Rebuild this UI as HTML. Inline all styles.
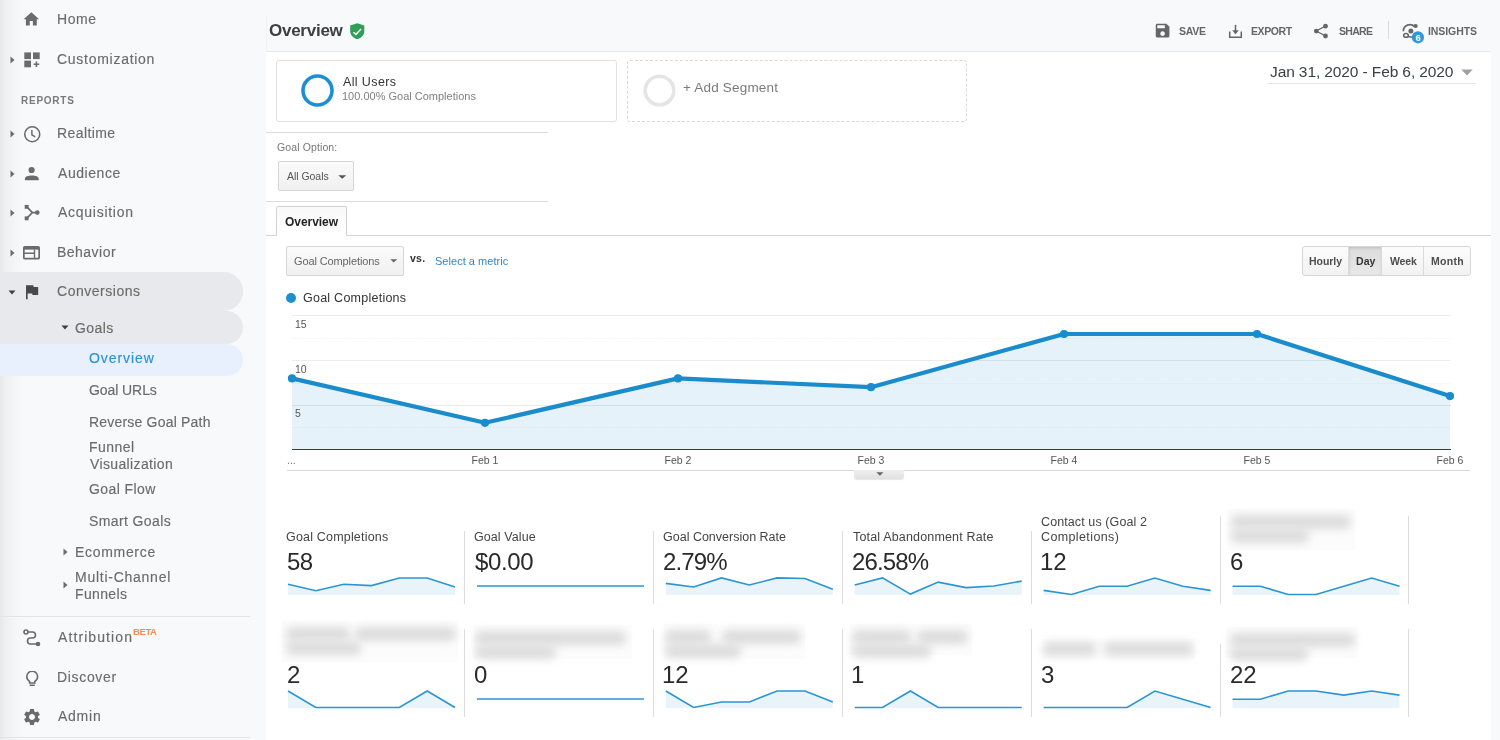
<!DOCTYPE html>
<html><head><meta charset="utf-8"><style>
html,body{margin:0;padding:0;width:1500px;height:740px;overflow:hidden;background:#fff}
body{position:relative;font-family:"Liberation Sans", sans-serif}
.t{position:absolute;white-space:nowrap;line-height:1;font-family:"Liberation Sans", sans-serif;will-change:transform}
.r{position:absolute;box-sizing:border-box}
svg.r{box-sizing:content-box}
</style></head><body>
<div class="r" style="left:0px;top:0px;width:266px;height:740px;background:linear-gradient(to right,#e6e8eb 0px,#eef0f2 6px,#f5f6f8 16px,#f8f9fa 26px)"></div>
<div class="r" style="left:0px;top:272px;width:243px;height:39px;background:#e8e9ec;border-radius:0 20px 20px 0"></div>
<div class="r" style="left:0px;top:311px;width:243px;height:33px;background:#e8e9ec;border-radius:0 17px 17px 0"></div>
<div class="r" style="left:0px;top:344px;width:243px;height:32px;background:#e8f0fd;border-radius:0 16px 16px 0"></div>
<svg class="r" style="left:22.2px;top:10.4px;" width="18.7" height="18.7" viewBox="0 0 24 24"><path d="M10 20v-6h4v6h5v-8h3L12 3 2 12h3v8z" fill="#6b6b6b"/></svg>
<div class="t" style="left:56.90px;top:12.45px;font-size:14px;color:#6b6b6b;font-weight:400;letter-spacing:0.600px;-webkit-text-stroke:0.15px #6b6b6b;">Home</div>
<svg class="r" style="left:10px;top:55.5px;" width="5" height="8" viewBox="0 0 5 8"><path d="M0.5 0.5 L4.5 4 L0.5 7.5Z" fill="#6b6b6b"/></svg>
<svg class="r" style="left:24px;top:51.5px;" width="16" height="16" viewBox="0 0 16 16"><rect x="0.3" y="0.4" width="6.7" height="6.7" fill="#6b6b6b"/><rect x="9" y="0.4" width="6.7" height="6.7" fill="#6b6b6b"/><rect x="0.3" y="8.6" width="6.7" height="6.7" fill="#6b6b6b"/><path d="M12.4 9.4v5.6M9.6 12.2h5.6" stroke="#6b6b6b" stroke-width="1.6"/></svg>
<div class="t" style="left:56.60px;top:51.95px;font-size:14px;color:#6b6b6b;font-weight:400;letter-spacing:0.725px;-webkit-text-stroke:0.15px #6b6b6b;">Customization</div>
<div class="t" style="left:21.20px;top:95.83px;font-size:10px;color:#7a7a7a;font-weight:700;letter-spacing:0.750px;">REPORTS</div>
<svg class="r" style="left:10px;top:130.3px;" width="5" height="8" viewBox="0 0 5 8"><path d="M0.5 0.5 L4.5 4 L0.5 7.5Z" fill="#6b6b6b"/></svg>
<svg class="r" style="left:22.6px;top:124.9px;" width="18.5" height="18.5" viewBox="0 0 20 20"><circle cx="10" cy="10" r="8.1" fill="none" stroke="#6b6b6b" stroke-width="1.7"/><path d="M9.6 5.4v5.2l3.6 2.2" fill="none" stroke="#6b6b6b" stroke-width="1.6"/></svg>
<div class="t" style="left:56.90px;top:126.45px;font-size:14px;color:#6b6b6b;font-weight:400;letter-spacing:0.400px;-webkit-text-stroke:0.15px #6b6b6b;">Realtime</div>
<svg class="r" style="left:10px;top:170px;" width="5" height="8" viewBox="0 0 5 8"><path d="M0.5 0.5 L4.5 4 L0.5 7.5Z" fill="#6b6b6b"/></svg>
<svg class="r" style="left:20px;top:160px;" width="24" height="24" viewBox="20 160 24 24"><circle cx="31.6" cy="170" r="3.1" fill="#6b6b6b"/><path d="M24.9 180.3V178.9C24.9 176.7 28 175.6 31.8 175.6C35.6 175.6 38.7 176.7 38.7 178.9V180.3Z" fill="#6b6b6b"/></svg>
<div class="t" style="left:57.90px;top:166.15px;font-size:14px;color:#6b6b6b;font-weight:400;letter-spacing:0.557px;-webkit-text-stroke:0.15px #6b6b6b;">Audience</div>
<svg class="r" style="left:10px;top:209.3px;" width="5" height="8" viewBox="0 0 5 8"><path d="M0.5 0.5 L4.5 4 L0.5 7.5Z" fill="#6b6b6b"/></svg>
<svg class="r" style="left:23.5px;top:203.8px;" width="17" height="17" viewBox="0 0 17 17"><path d="M2.5 2.5 L8.4 8.6 L2.5 14.7 M8.4 8.6 H13" fill="none" stroke="#6b6b6b" stroke-width="1.7"/><rect x="0.7" y="0.9" width="3.9" height="3.9" fill="#6b6b6b"/><rect x="0.7" y="12.4" width="3.9" height="3.9" fill="#6b6b6b"/><circle cx="13.3" cy="8.6" r="2.3" fill="#6b6b6b"/></svg>
<div class="t" style="left:57.90px;top:205.45px;font-size:14px;color:#6b6b6b;font-weight:400;letter-spacing:0.730px;-webkit-text-stroke:0.15px #6b6b6b;">Acquisition</div>
<svg class="r" style="left:10px;top:248.7px;" width="5" height="8" viewBox="0 0 5 8"><path d="M0.5 0.5 L4.5 4 L0.5 7.5Z" fill="#6b6b6b"/></svg>
<svg class="r" style="left:23px;top:246px;" width="17" height="13.5" viewBox="0 0 17 13.5"><rect x="0.85" y="0.85" width="15.3" height="11.8" rx="1" fill="none" stroke="#6b6b6b" stroke-width="1.7"/><rect x="0.85" y="0.85" width="15.3" height="2.8" fill="#6b6b6b"/><path d="M1 7.2H11.5M11.5 3.6V12.6" stroke="#6b6b6b" stroke-width="1.4"/></svg>
<div class="t" style="left:56.90px;top:244.85px;font-size:14px;color:#6b6b6b;font-weight:400;letter-spacing:0.471px;-webkit-text-stroke:0.15px #6b6b6b;">Behavior</div>
<svg class="r" style="left:7.800000000000001px;top:290.1px;" width="8" height="5" viewBox="0 0 8 5"><path d="M0.5 0.5 L7.5 0.5 L4 4.5Z" fill="#3c4043"/></svg>
<svg class="r" style="left:26px;top:285.3px;overflow:visible" width="13" height="14.5" viewBox="5 4 16 17"><path d="M14.4 6L14 4H5v17h2v-7h5.6l.4 2h7V6z" fill="#484848"/></svg>
<div class="t" style="left:56.90px;top:284.15px;font-size:14px;color:#6b6b6b;font-weight:400;letter-spacing:0.520px;-webkit-text-stroke:0.15px #6b6b6b;">Conversions</div>
<svg class="r" style="left:61.2px;top:324.9px;" width="8" height="5" viewBox="0 0 8 5"><path d="M0.5 0.5 L7.5 0.5 L4 4.5Z" fill="#3c4043"/></svg>
<div class="t" style="left:75.00px;top:320.95px;font-size:14px;color:#6b6b6b;font-weight:400;letter-spacing:0.425px;-webkit-text-stroke:0.15px #6b6b6b;">Goals</div>
<div class="t" style="left:88.50px;top:351.15px;font-size:14px;color:#2b93d1;font-weight:400;letter-spacing:0.914px;-webkit-text-stroke:0.15px #2b93d1;">Overview</div>
<div class="t" style="left:88.50px;top:383.35px;font-size:14px;color:#6b6b6b;font-weight:400;letter-spacing:-0.075px;-webkit-text-stroke:0.15px #6b6b6b;">Goal URLs</div>
<div class="t" style="left:88.50px;top:415.15px;font-size:14px;color:#6b6b6b;font-weight:400;letter-spacing:0.200px;-webkit-text-stroke:0.15px #6b6b6b;">Reverse Goal Path</div>
<div class="t" style="left:88.50px;top:439.55px;font-size:14px;color:#6b6b6b;font-weight:400;letter-spacing:0.480px;-webkit-text-stroke:0.15px #6b6b6b;">Funnel</div>
<div class="t" style="left:89.50px;top:457.05px;font-size:14px;color:#6b6b6b;font-weight:400;letter-spacing:0.367px;-webkit-text-stroke:0.15px #6b6b6b;">Visualization</div>
<div class="t" style="left:88.50px;top:481.85px;font-size:14px;color:#6b6b6b;font-weight:400;letter-spacing:0.412px;-webkit-text-stroke:0.15px #6b6b6b;">Goal Flow</div>
<div class="t" style="left:88.50px;top:514.15px;font-size:14px;color:#6b6b6b;font-weight:400;letter-spacing:0.390px;-webkit-text-stroke:0.15px #6b6b6b;">Smart Goals</div>
<svg class="r" style="left:63px;top:548.3px;" width="5" height="8" viewBox="0 0 5 8"><path d="M0.5 0.5 L4.5 4 L0.5 7.5Z" fill="#6b6b6b"/></svg>
<div class="t" style="left:74.50px;top:545.15px;font-size:14px;color:#6b6b6b;font-weight:400;letter-spacing:0.688px;-webkit-text-stroke:0.15px #6b6b6b;">Ecommerce</div>
<svg class="r" style="left:63px;top:581.2px;" width="5" height="8" viewBox="0 0 5 8"><path d="M0.5 0.5 L4.5 4 L0.5 7.5Z" fill="#6b6b6b"/></svg>
<div class="t" style="left:74.50px;top:570.15px;font-size:14px;color:#6b6b6b;font-weight:400;letter-spacing:0.742px;-webkit-text-stroke:0.15px #6b6b6b;">Multi-Channel</div>
<div class="t" style="left:74.50px;top:587.15px;font-size:14px;color:#6b6b6b;font-weight:400;letter-spacing:0.350px;-webkit-text-stroke:0.15px #6b6b6b;">Funnels</div>
<div class="r" style="left:0px;top:616px;width:250px;height:1px;background:#e3e4e6"></div>
<svg class="r" style="left:23px;top:628.5px;" width="18" height="18" viewBox="0 0 18 18"><circle cx="3" cy="3" r="2" fill="none" stroke="#6b6b6b" stroke-width="1.6"/><path d="M5 3H9.5a3 3 0 0 1 0 6H7.5a3 3 0 0 0 0 6H13" fill="none" stroke="#6b6b6b" stroke-width="1.6"/><circle cx="15" cy="15" r="2.3" fill="#6b6b6b"/></svg>
<div class="t" style="left:57.80px;top:629.85px;font-size:14px;color:#6b6b6b;font-weight:400;letter-spacing:1.090px;-webkit-text-stroke:0.15px #6b6b6b;">Attribution</div>
<div class="t" style="left:133.30px;top:626.76px;font-size:9.5px;color:#e9905c;font-weight:700;letter-spacing:-0.400px;">BETA</div>
<svg class="r" style="left:24.5px;top:670.5px;" width="14.5" height="15.5" viewBox="0 0 14.5 15.5"><path d="M4.6 10.4C2.9 9.4 1.8 7.6 1.8 5.6A5.4 5.4 0 0 1 12.6 5.6C12.6 7.6 11.5 9.4 9.8 10.4V12H4.6Z" fill="none" stroke="#6b6b6b" stroke-width="1.6"/><path d="M4.6 14.3H9.8" stroke="#6b6b6b" stroke-width="1.6"/></svg>
<div class="t" style="left:56.80px;top:669.95px;font-size:14px;color:#6b6b6b;font-weight:400;letter-spacing:0.671px;-webkit-text-stroke:0.15px #6b6b6b;">Discover</div>
<svg class="r" style="left:21.6px;top:706.6px;" width="20" height="20" viewBox="0 0 24 24"><path d="M19.14 12.94c.04-.3.06-.61.06-.94 0-.32-.02-.64-.07-.94l2.03-1.58c.18-.14.23-.41.12-.61l-1.92-3.32c-.12-.22-.37-.29-.59-.22l-2.39.96c-.5-.38-1.03-.7-1.62-.94l-.36-2.54c-.04-.24-.24-.41-.48-.41h-3.84c-.24 0-.43.17-.47.41l-.36 2.54c-.59.24-1.13.57-1.62.94l-2.39-.96c-.22-.08-.47 0-.59.22L2.74 8.87c-.12.21-.08.47.12.61l2.03 1.58c-.05.3-.09.63-.09.94s.02.64.07.94l-2.03 1.58c-.18.14-.23.41-.12.61l1.92 3.32c.12.22.37.29.59.22l2.39-.96c.5.38 1.03.7 1.62.94l.36 2.54c.05.24.24.41.48.41h3.84c.24 0 .44-.17.47-.41l.36-2.54c.59-.24 1.13-.56 1.62-.94l2.39.96c.22.08.47 0 .59-.22l1.92-3.32c.12-.22.07-.47-.12-.61l-2.01-1.58zM12 15.6c-1.98 0-3.6-1.62-3.6-3.6s1.62-3.6 3.6-3.6 3.6 1.62 3.6 3.6-1.62 3.6-3.6 3.6z" fill="#6b6b6b"/></svg>
<div class="t" style="left:57.80px;top:709.35px;font-size:14px;color:#6b6b6b;font-weight:400;letter-spacing:0.750px;-webkit-text-stroke:0.15px #6b6b6b;">Admin</div>
<div class="r" style="left:0px;top:737px;width:250px;height:1px;background:#e3e4e6"></div>
<div class="r" style="left:266px;top:0px;width:1234px;height:740px;background:#f8f9fa"></div>
<div class="r" style="left:266px;top:17px;width:1225px;height:723px;background:#f8f9fa;border-left:1px solid #f1f2f4"></div>
<div class="r" style="left:266px;top:51px;width:1225px;height:689px;background:#fff;border-top:1px solid #e6e7e9"></div>
<div class="t" style="left:268.60px;top:21.61px;font-size:17px;color:#3c4043;font-weight:700;letter-spacing:-0.257px;">Overview</div>
<svg class="r" style="left:349.6px;top:22.6px;" width="15" height="16.5" viewBox="0 0 15 16.5"><path d="M7.25 0.3L14.3 2.6V8.2C14.3 11.9 11.2 15.1 7.25 16.2 3.3 15.1 0.2 11.9 0.2 8.2V2.6Z" fill="#2e9e58"/><path d="M3.4 9.2L5.9 11.5 11 6.1" fill="none" stroke="#fff" stroke-width="1.4"/></svg>
<svg class="r" style="left:1155.2px;top:23.2px;" width="15.2" height="15.2" viewBox="2 2 20 20"><path d="M17 3H5c-1.11 0-2 .9-2 2v14c0 1.1.89 2 2 2h14c1.1 0 2-.9 2-2V7l-4-4zm-5 16c-1.66 0-3-1.34-3-3s1.34-3 3-3 3 1.34 3 3-1.34 3-3 3zm3-10H5V5h10v4z" fill="#666666"/></svg>
<div class="t" style="left:1179.10px;top:26.21px;font-size:10.5px;color:#666666;font-weight:700;letter-spacing:-0.267px;">SAVE</div>
<svg class="r" style="left:1228px;top:23.5px;" width="15" height="15" viewBox="0 0 15 15"><path d="M1.7 7.6V13.2H13.3V7.6" fill="none" stroke="#666666" stroke-width="1.5"/><path d="M7.5 0.8V9.4" stroke="#666666" stroke-width="1.5"/><path d="M4.2 6.3L7.5 10.2 10.8 6.3Z" fill="#666666"/></svg>
<div class="t" style="left:1250.70px;top:26.21px;font-size:10.5px;color:#666666;font-weight:700;letter-spacing:-0.400px;">EXPORT</div>
<svg class="r" style="left:1313px;top:23px;" width="16" height="16" viewBox="0 0 16 16"><circle cx="12.5" cy="3.2" r="2.4" fill="#666666"/><circle cx="3.3" cy="8.1" r="2.4" fill="#666666"/><circle cx="12.5" cy="13" r="2.4" fill="#666666"/><path d="M12.6 3L3.2 8 12.6 13" fill="none" stroke="#666666" stroke-width="1.4"/></svg>
<div class="t" style="left:1338.60px;top:26.21px;font-size:10.5px;color:#666666;font-weight:700;letter-spacing:-0.700px;">SHARE</div>
<div class="r" style="left:1388px;top:21px;width:1px;height:18px;background:#dadce0"></div>
<svg class="r" style="left:1398px;top:18px;" width="30" height="28" viewBox="0 0 30 28"><path d="M5.3 13.2A6.6 6.6 0 0 1 16.6 8.6" fill="none" stroke="#666666" stroke-width="1.7"/><circle cx="17.6" cy="8" r="2.1" fill="#666666"/><circle cx="12.9" cy="12.9" r="2.5" fill="#666666"/><ellipse cx="8" cy="17.4" rx="2.3" ry="1.9" fill="none" stroke="#666666" stroke-width="1.5"/><path d="M10 18.4 L14.5 19.3" stroke="#666666" stroke-width="1.5"/><circle cx="19.9" cy="19.3" r="6.1" fill="#2d98da"/><text x="19.9" y="22.6" text-anchor="middle" font-family="Liberation Sans" font-weight="700" font-size="9" fill="#fff">6</text></svg>
<div class="t" style="left:1427.60px;top:26.21px;font-size:10.5px;color:#666666;font-weight:700;letter-spacing:-0.086px;">INSIGHTS</div>
<div class="r" style="left:276px;top:60px;width:341px;height:62px;border:1px solid #dfe1e3;border-radius:3px;background:#fff;box-sizing:border-box"></div>
<svg class="r" style="left:300px;top:73px;" width="35" height="35" viewBox="0 0 35 35"><circle cx="17.5" cy="17.5" r="14.5" fill="none" stroke="#1e8ed3" stroke-width="3.6"/></svg>
<div class="t" style="left:343.00px;top:76.42px;font-size:12.5px;color:#333;font-weight:400;letter-spacing:0.375px;">All Users</div>
<div class="t" style="left:342.00px;top:91.49px;font-size:11px;color:#808080;font-weight:400;letter-spacing:0.000px;">100.00% Goal Completions</div>
<div class="r" style="left:627px;top:60px;width:340px;height:62px;border:1px dashed #d9d9d9;border-radius:3px;box-sizing:border-box"></div>
<svg class="r" style="left:642px;top:72.9px;" width="35" height="35" viewBox="0 0 35 35"><circle cx="17.5" cy="17.5" r="14.3" fill="none" stroke="#e5e5e5" stroke-width="3.6"/></svg>
<div class="t" style="left:683.00px;top:81.07px;font-size:13.5px;color:#7a7a7a;font-weight:400;letter-spacing:0.192px;">+ Add Segment</div>
<div class="t" style="left:1270.00px;top:63.88px;font-size:15.5px;color:#3c4043;font-weight:400;letter-spacing:-0.108px;">Jan 31, 2020 - Feb 6, 2020</div>
<svg class="r" style="left:1461px;top:69px;" width="12" height="7" viewBox="0 0 12 7"><path d="M0.3 0.5H11.7L6 6.5Z" fill="#a0a0a0"/></svg>
<div class="r" style="left:1267px;top:83px;width:209px;height:1px;background:#e6e6e6"></div>
<div class="r" style="left:266px;top:132px;width:282px;height:1px;background:#dcdcdc"></div>
<div class="t" style="left:276.70px;top:141.61px;font-size:10.5px;color:#777;font-weight:400;letter-spacing:0.118px;">Goal Option:</div>
<div class="r" style="left:278px;top:161px;width:76px;height:30px;border:1px solid #d6d6d6;border-radius:2px;background:linear-gradient(#fbfbfb,#f0f0f0);box-sizing:border-box"></div>
<div class="t" style="left:286.60px;top:171.31px;font-size:10.5px;color:#555;font-weight:400;letter-spacing:-0.037px;">All Goals</div>
<svg class="r" style="left:337.5px;top:174.8px;" width="9" height="4" viewBox="0 0 9 4"><path d="M0.3 0.3H8.2L4.25 3.8Z" fill="#555"/></svg>
<div class="r" style="left:266px;top:201px;width:282px;height:1px;background:#dcdcdc"></div>
<div class="r" style="left:276px;top:206px;width:71px;height:30px;border:1px solid #d0d0d0;border-bottom:none;border-radius:2px 2px 0 0;background:linear-gradient(#f9f9f9,#fff);box-sizing:border-box"></div>
<div class="r" style="left:266px;top:235px;width:1225px;height:1px;background:#d5d5d5"></div>
<div class="r" style="left:277px;top:235px;width:69px;height:1px;background:#fff"></div>
<div class="t" style="left:285.30px;top:215.74px;font-size:12px;color:#222;font-weight:700;letter-spacing:-0.043px;">Overview</div>
<div class="r" style="left:286px;top:246px;width:118px;height:30px;border:1px solid #d6d6d6;border-radius:2px;background:linear-gradient(#fbfbfb,#f0f0f0);box-sizing:border-box"></div>
<div class="t" style="left:294.30px;top:255.99px;font-size:11px;color:#666;font-weight:400;letter-spacing:-0.113px;">Goal Completions</div>
<svg class="r" style="left:389.5px;top:259.2px;" width="8" height="4" viewBox="0 0 8 4"><path d="M0.3 0.3H7.2L3.75 3.6Z" fill="#666"/></svg>
<div class="t" style="left:409.50px;top:252.91px;font-size:10.5px;color:#333;font-weight:700;letter-spacing:0.250px;">vs.</div>
<div class="t" style="left:435.40px;top:255.99px;font-size:11px;color:#2b88cf;font-weight:400;letter-spacing:0.029px;">Select a metric</div>
<div class="r" style="left:1302px;top:246px;width:169px;height:30px;border:1px solid #d6d6d6;border-radius:3px;background:linear-gradient(#fcfcfc,#f2f2f2);box-sizing:border-box"></div>
<div class="r" style="left:1349px;top:247px;width:33px;height:28px;background:linear-gradient(#dcdcdc,#e8e8e8);box-shadow:inset 0 1px 3px rgba(0,0,0,.15)"></div>
<div class="r" style="left:1348px;top:247px;width:1px;height:28px;background:#dadada"></div>
<div class="r" style="left:1381px;top:247px;width:1px;height:28px;background:#dadada"></div>
<div class="r" style="left:1423px;top:247px;width:1px;height:28px;background:#dadada"></div>
<div class="t" style="left:1308.80px;top:255.81px;font-size:10.5px;color:#4d4d4d;font-weight:700;letter-spacing:-0.040px;">Hourly</div>
<div class="t" style="left:1355.70px;top:255.81px;font-size:10.5px;color:#333;font-weight:700;letter-spacing:0.100px;">Day</div>
<div class="t" style="left:1390.00px;top:255.81px;font-size:10.5px;color:#4d4d4d;font-weight:700;letter-spacing:-0.167px;">Week</div>
<div class="t" style="left:1430.70px;top:255.81px;font-size:10.5px;color:#4d4d4d;font-weight:700;letter-spacing:0.325px;">Month</div>
<svg class="r" style="left:285.5px;top:293.3px;" width="10" height="10" viewBox="0 0 10 10"><circle cx="5" cy="5" r="5" fill="#1e8ed3"/></svg>
<div class="t" style="left:303.30px;top:292.02px;font-size:12.5px;color:#333;font-weight:400;letter-spacing:0.247px;">Goal Completions</div>
<svg class="r" style="left:0px;top:0px;pointer-events:none" width="1500" height="740" viewBox="0 0 1500 740"><path d="M292 449.4 L292.0 378.4 L485.0 422.8 L678.0 378.4 L871.0 387.2 L1064.0 334.0 L1257.0 334.0 L1450.0 396.1 L1450 449.4Z" fill="#e6f2f9"/><line x1="292" y1="315.5" x2="1451" y2="315.5" stroke="#000" stroke-opacity="0.08" stroke-width="1"/><line x1="292" y1="360.5" x2="1451" y2="360.5" stroke="#000" stroke-opacity="0.08" stroke-width="1"/><line x1="292" y1="405.5" x2="1451" y2="405.5" stroke="#000" stroke-opacity="0.08" stroke-width="1"/><line x1="292" y1="338.5" x2="1451" y2="338.5" stroke="#000" stroke-opacity="0.05" stroke-width="1" stroke-dasharray="1.5,1.5"/><line x1="292" y1="383.5" x2="1451" y2="383.5" stroke="#000" stroke-opacity="0.05" stroke-width="1" stroke-dasharray="1.5,1.5"/><line x1="292" y1="427.5" x2="1451" y2="427.5" stroke="#000" stroke-opacity="0.05" stroke-width="1" stroke-dasharray="1.5,1.5"/><line x1="292" y1="449.5" x2="1451" y2="449.5" stroke="#3a3a3a" stroke-width="1"/><path d="M292.0 378.4 L485.0 422.8 L678.0 378.4 L871.0 387.2 L1064.0 334.0 L1257.0 334.0 L1450.0 396.1" fill="none" stroke="#1a8bcb" stroke-width="4.2" stroke-linejoin="round"/><circle cx="292.0" cy="378.4" r="4.1" fill="#1a8bcb"/><circle cx="485.0" cy="422.8" r="4.1" fill="#1a8bcb"/><circle cx="678.0" cy="378.4" r="4.1" fill="#1a8bcb"/><circle cx="871.0" cy="387.2" r="4.1" fill="#1a8bcb"/><circle cx="1064.0" cy="334.0" r="4.1" fill="#1a8bcb"/><circle cx="1257.0" cy="334.0" r="4.1" fill="#1a8bcb"/><circle cx="1450.0" cy="396.1" r="4.1" fill="#1a8bcb"/></svg>
<div class="t" style="left:294.50px;top:319.11px;font-size:10.5px;color:#555;font-weight:400;letter-spacing:0.000px;">15</div>
<div class="t" style="left:294.50px;top:363.91px;font-size:10.5px;color:#555;font-weight:400;letter-spacing:0.000px;">10</div>
<div class="t" style="left:294.50px;top:408.31px;font-size:10.5px;color:#555;font-weight:400;letter-spacing:0.000px;">5</div>
<div class="t" style="left:287.00px;top:454.61px;font-size:10.5px;color:#777;font-weight:400;letter-spacing:0.000px;">...</div>
<div class="t" style="left:455.0px;width:60px;text-align:center;top:455.11px;font-size:10.5px;color:#555">Feb 1</div>
<div class="t" style="left:648.0px;width:60px;text-align:center;top:455.11px;font-size:10.5px;color:#555">Feb 2</div>
<div class="t" style="left:841.0px;width:60px;text-align:center;top:455.11px;font-size:10.5px;color:#555">Feb 3</div>
<div class="t" style="left:1034.0px;width:60px;text-align:center;top:455.11px;font-size:10.5px;color:#555">Feb 4</div>
<div class="t" style="left:1227.0px;width:60px;text-align:center;top:455.11px;font-size:10.5px;color:#555">Feb 5</div>
<div class="t" style="left:1420.0px;width:60px;text-align:center;top:455.11px;font-size:10.5px;color:#555">Feb 6</div>
<div class="r" style="left:287px;top:470px;width:1183px;height:1px;background:#d8d8d8"></div>
<div class="r" style="left:854px;top:470px;width:50px;height:9px;background:linear-gradient(#f0f0f0,#e0e0e0);border-radius:0 0 3px 3px;box-shadow:0 1px 1px rgba(0,0,0,.1)"></div>
<svg class="r" style="left:875.5px;top:471.5px;" width="8" height="4" viewBox="0 0 8 4"><path d="M0.3 0.3H7.5L3.9 3.7Z" fill="#666"/></svg>
<div class="r" style="left:464px;top:530.8px;width:1px;height:73.70000000000005px;background:#dcdcdc"></div>
<div class="t" style="left:285.90px;top:530.52px;font-size:12.5px;color:#444;font-weight:400;letter-spacing:0.187px;">Goal Completions</div>
<div class="t" style="left:286.50px;top:550.28px;font-size:24px;color:#2a2a2a;font-weight:400;letter-spacing:-0.700px;">58</div>
<svg class="r" style="left:0px;top:0px;pointer-events:none" width="1500" height="740" viewBox="0 0 1500 740"><path d="M288.0 595 L288.0 584.3 L315.8 590.7 L343.7 584.3 L371.5 585.6 L399.3 578.0 L427.2 578.0 L455.0 586.9 L455.0 595Z" fill="#e8f3fa"/><path d="M288.0 584.3 L315.8 590.7 L343.7 584.3 L371.5 585.6 L399.3 578.0 L427.2 578.0 L455.0 586.9" fill="none" stroke="#2b95d2" stroke-width="1.6"/></svg>
<div class="r" style="left:653px;top:530.8px;width:1px;height:73.70000000000005px;background:#dcdcdc"></div>
<div class="t" style="left:474.10px;top:530.52px;font-size:12.5px;color:#444;font-weight:400;letter-spacing:0.078px;">Goal Value</div>
<div class="t" style="left:475.20px;top:550.28px;font-size:24px;color:#2a2a2a;font-weight:400;letter-spacing:-0.350px;">$0.00</div>
<svg class="r" style="left:0px;top:0px;pointer-events:none" width="1500" height="740" viewBox="0 0 1500 740"><path d="M476.9 586.0 L504.7 586.0 L532.6 586.0 L560.4 586.0 L588.2 586.0 L616.1 586.0 L643.9 586.0" fill="none" stroke="#2b95d2" stroke-width="1.6"/></svg>
<div class="r" style="left:842px;top:530.8px;width:1px;height:73.70000000000005px;background:#dcdcdc"></div>
<div class="t" style="left:663.00px;top:530.52px;font-size:12.5px;color:#444;font-weight:400;letter-spacing:0.000px;">Goal Conversion Rate</div>
<div class="t" style="left:663.10px;top:550.28px;font-size:24px;color:#2a2a2a;font-weight:400;letter-spacing:-0.875px;">2.79%</div>
<svg class="r" style="left:0px;top:0px;pointer-events:none" width="1500" height="740" viewBox="0 0 1500 740"><path d="M665.8 595 L665.8 583.4 L693.6 587.0 L721.5 577.9 L749.3 585.0 L777.1 577.9 L805.0 578.5 L832.8 589.2 L832.8 595Z" fill="#e8f3fa"/><path d="M665.8 583.4 L693.6 587.0 L721.5 577.9 L749.3 585.0 L777.1 577.9 L805.0 578.5 L832.8 589.2" fill="none" stroke="#2b95d2" stroke-width="1.6"/></svg>
<div class="r" style="left:1031px;top:530.8px;width:1px;height:73.70000000000005px;background:#dcdcdc"></div>
<div class="t" style="left:852.90px;top:530.52px;font-size:12.5px;color:#444;font-weight:400;letter-spacing:0.167px;">Total Abandonment Rate</div>
<div class="t" style="left:852.00px;top:550.28px;font-size:24px;color:#2a2a2a;font-weight:400;letter-spacing:-0.880px;">26.58%</div>
<svg class="r" style="left:0px;top:0px;pointer-events:none" width="1500" height="740" viewBox="0 0 1500 740"><path d="M854.7 595 L854.7 585.0 L882.5 577.9 L910.4 594.1 L938.2 582.1 L966.0 587.6 L993.9 586.0 L1021.7 581.1 L1021.7 595Z" fill="#e8f3fa"/><path d="M854.7 585.0 L882.5 577.9 L910.4 594.1 L938.2 582.1 L966.0 587.6 L993.9 586.0 L1021.7 581.1" fill="none" stroke="#2b95d2" stroke-width="1.6"/></svg>
<div class="r" style="left:1220px;top:516.1999999999999px;width:1px;height:88.30000000000007px;background:#dcdcdc"></div>
<div class="t" style="left:1040.80px;top:515.92px;font-size:12.5px;color:#444;font-weight:400;letter-spacing:0.100px;">Contact us (Goal 2</div>
<div class="t" style="left:1040.80px;top:530.52px;font-size:12.5px;color:#444;font-weight:400;letter-spacing:0.382px;">Completions)</div>
<div class="t" style="left:1039.90px;top:550.28px;font-size:24px;color:#2a2a2a;font-weight:400;letter-spacing:0.000px;">12</div>
<svg class="r" style="left:0px;top:0px;pointer-events:none" width="1500" height="740" viewBox="0 0 1500 740"><path d="M1043.6 595 L1043.6 590.4 L1071.4 594.5 L1099.3 586.2 L1127.1 586.2 L1154.9 578.0 L1182.8 586.2 L1210.6 590.4 L1210.6 595Z" fill="#e8f3fa"/><path d="M1043.6 590.4 L1071.4 594.5 L1099.3 586.2 L1127.1 586.2 L1154.9 578.0 L1182.8 586.2 L1210.6 590.4" fill="none" stroke="#2b95d2" stroke-width="1.6"/></svg>
<div class="r" style="left:1408px;top:516.1999999999999px;width:1px;height:88.30000000000007px;background:#dcdcdc"></div>
<div class="r" style="left:1227.6px;top:508.7px;width:127.20000000000005px;height:40.900000000000034px;background:#fcfcfc"></div>
<div class="r" style="left:1231px;top:514.7px;width:120px;height:14.0px;background:#dcdcdc;filter:blur(4px);border-radius:6px"></div>
<div class="r" style="left:1231px;top:528.7px;width:78px;height:14.0px;background:#dcdcdc;filter:blur(4px);border-radius:6px"></div>
<div class="t" style="left:1229.80px;top:550.28px;font-size:24px;color:#2a2a2a;font-weight:400;letter-spacing:0.000px;">6</div>
<svg class="r" style="left:0px;top:0px;pointer-events:none" width="1500" height="740" viewBox="0 0 1500 740"><path d="M1232.5 595 L1232.5 586.2 L1260.3 586.2 L1288.2 594.5 L1316.0 594.5 L1343.8 586.2 L1371.7 578.0 L1399.5 586.2 L1399.5 595Z" fill="#e8f3fa"/><path d="M1232.5 586.2 L1260.3 586.2 L1288.2 594.5 L1316.0 594.5 L1343.8 586.2 L1371.7 578.0 L1399.5 586.2" fill="none" stroke="#2b95d2" stroke-width="1.6"/></svg>
<div class="r" style="left:464px;top:629.1999999999999px;width:1px;height:88.30000000000007px;background:#dcdcdc"></div>
<div class="r" style="left:282px;top:621.2px;width:176.39999999999998px;height:40.39999999999998px;background:#fcfcfc"></div>
<div class="r" style="left:286px;top:627.2px;width:64px;height:14.0px;background:#dcdcdc;filter:blur(4px);border-radius:6px"></div>
<div class="r" style="left:355px;top:627.2px;width:101px;height:14.0px;background:#dcdcdc;filter:blur(4px);border-radius:6px"></div>
<div class="r" style="left:286px;top:641.2px;width:75px;height:14.0px;background:#dcdcdc;filter:blur(4px);border-radius:6px"></div>
<div class="t" style="left:286.50px;top:663.28px;font-size:24px;color:#2a2a2a;font-weight:400;letter-spacing:0.000px;">2</div>
<svg class="r" style="left:0px;top:0px;pointer-events:none" width="1500" height="740" viewBox="0 0 1500 740"><path d="M288.0 708 L288.0 691.0 L315.8 707.5 L343.7 707.5 L371.5 707.5 L399.3 707.5 L427.2 691.0 L455.0 707.5 L455.0 708Z" fill="#e8f3fa"/><path d="M288.0 691.0 L315.8 707.5 L343.7 707.5 L371.5 707.5 L399.3 707.5 L427.2 691.0 L455.0 707.5" fill="none" stroke="#2b95d2" stroke-width="1.6"/></svg>
<div class="r" style="left:653px;top:629.1999999999999px;width:1px;height:88.30000000000007px;background:#dcdcdc"></div>
<div class="r" style="left:473.6px;top:625px;width:158.39999999999998px;height:33.5px;background:#fcfcfc"></div>
<div class="r" style="left:475px;top:631px;width:151px;height:14px;background:#dcdcdc;filter:blur(4px);border-radius:6px"></div>
<div class="r" style="left:475px;top:645px;width:81px;height:14px;background:#dcdcdc;filter:blur(4px);border-radius:6px"></div>
<div class="t" style="left:474.20px;top:663.28px;font-size:24px;color:#2a2a2a;font-weight:400;letter-spacing:0.000px;">0</div>
<svg class="r" style="left:0px;top:0px;pointer-events:none" width="1500" height="740" viewBox="0 0 1500 740"><path d="M476.9 699.0 L504.7 699.0 L532.6 699.0 L560.4 699.0 L588.2 699.0 L616.1 699.0 L643.9 699.0" fill="none" stroke="#2b95d2" stroke-width="1.6"/></svg>
<div class="r" style="left:842px;top:629.1999999999999px;width:1px;height:88.30000000000007px;background:#dcdcdc"></div>
<div class="r" style="left:663.5px;top:624.1px;width:141.20000000000005px;height:35.10000000000002px;background:#fcfcfc"></div>
<div class="r" style="left:665px;top:630.1px;width:46px;height:14.0px;background:#dcdcdc;filter:blur(4px);border-radius:6px"></div>
<div class="r" style="left:722px;top:630.1px;width:79px;height:14.0px;background:#dcdcdc;filter:blur(4px);border-radius:6px"></div>
<div class="r" style="left:665px;top:644.1px;width:76px;height:14.0px;background:#dcdcdc;filter:blur(4px);border-radius:6px"></div>
<div class="t" style="left:662.10px;top:663.28px;font-size:24px;color:#2a2a2a;font-weight:400;letter-spacing:0.000px;">12</div>
<svg class="r" style="left:0px;top:0px;pointer-events:none" width="1500" height="740" viewBox="0 0 1500 740"><path d="M665.8 708 L665.8 691.0 L693.6 707.5 L721.5 702.0 L749.3 702.0 L777.1 691.0 L805.0 691.0 L832.8 702.0 L832.8 708Z" fill="#e8f3fa"/><path d="M665.8 691.0 L693.6 707.5 L721.5 702.0 L749.3 702.0 L777.1 691.0 L805.0 691.0 L832.8 702.0" fill="none" stroke="#2b95d2" stroke-width="1.6"/></svg>
<div class="r" style="left:1031px;top:629.1999999999999px;width:1px;height:88.30000000000007px;background:#dcdcdc"></div>
<div class="r" style="left:850.2px;top:624px;width:122.19999999999993px;height:31.299999999999955px;background:#fcfcfc"></div>
<div class="r" style="left:852px;top:630px;width:59px;height:14px;background:#dcdcdc;filter:blur(4px);border-radius:6px"></div>
<div class="r" style="left:917px;top:630px;width:51px;height:14px;background:#dcdcdc;filter:blur(4px);border-radius:6px"></div>
<div class="r" style="left:852px;top:644px;width:79px;height:14px;background:#dcdcdc;filter:blur(4px);border-radius:6px"></div>
<div class="t" style="left:851.00px;top:663.28px;font-size:24px;color:#2a2a2a;font-weight:400;letter-spacing:0.000px;">1</div>
<svg class="r" style="left:0px;top:0px;pointer-events:none" width="1500" height="740" viewBox="0 0 1500 740"><path d="M854.7 708 L854.7 707.5 L882.5 707.5 L910.4 691.0 L938.2 707.5 L966.0 707.5 L993.9 707.5 L1021.7 707.5 L1021.7 708Z" fill="#e8f3fa"/><path d="M854.7 707.5 L882.5 707.5 L910.4 691.0 L938.2 707.5 L966.0 707.5 L993.9 707.5 L1021.7 707.5" fill="none" stroke="#2b95d2" stroke-width="1.6"/></svg>
<div class="r" style="left:1220px;top:643.8px;width:1px;height:73.70000000000005px;background:#dcdcdc"></div>
<div class="r" style="left:1041.7px;top:638.9px;width:153.39999999999986px;height:19.800000000000068px;background:#fcfcfc"></div>
<div class="r" style="left:1043px;top:641.9px;width:53px;height:14.0px;background:#dcdcdc;filter:blur(4px);border-radius:6px"></div>
<div class="r" style="left:1104px;top:641.9px;width:89px;height:14.0px;background:#dcdcdc;filter:blur(4px);border-radius:6px"></div>
<div class="t" style="left:1040.90px;top:663.28px;font-size:24px;color:#2a2a2a;font-weight:400;letter-spacing:0.000px;">3</div>
<svg class="r" style="left:0px;top:0px;pointer-events:none" width="1500" height="740" viewBox="0 0 1500 740"><path d="M1043.6 708 L1043.6 707.5 L1071.4 707.5 L1099.3 707.5 L1127.1 707.5 L1154.9 691.0 L1182.8 699.2 L1210.6 707.5 L1210.6 708Z" fill="#e8f3fa"/><path d="M1043.6 707.5 L1071.4 707.5 L1099.3 707.5 L1127.1 707.5 L1154.9 691.0 L1182.8 699.2 L1210.6 707.5" fill="none" stroke="#2b95d2" stroke-width="1.6"/></svg>
<div class="r" style="left:1408px;top:629.1999999999999px;width:1px;height:88.30000000000007px;background:#dcdcdc"></div>
<div class="r" style="left:1226.3px;top:626.7px;width:131.29999999999995px;height:31.199999999999932px;background:#fcfcfc"></div>
<div class="r" style="left:1230px;top:632.7px;width:125px;height:14.0px;background:#dcdcdc;filter:blur(4px);border-radius:6px"></div>
<div class="r" style="left:1230px;top:646.7px;width:78px;height:14.0px;background:#dcdcdc;filter:blur(4px);border-radius:6px"></div>
<div class="t" style="left:1229.80px;top:663.28px;font-size:24px;color:#2a2a2a;font-weight:400;letter-spacing:0.000px;">22</div>
<svg class="r" style="left:0px;top:0px;pointer-events:none" width="1500" height="740" viewBox="0 0 1500 740"><path d="M1232.5 708 L1232.5 699.2 L1260.3 699.2 L1288.2 691.0 L1316.0 691.0 L1343.8 695.1 L1371.7 691.0 L1399.5 695.1 L1399.5 708Z" fill="#e8f3fa"/><path d="M1232.5 699.2 L1260.3 699.2 L1288.2 691.0 L1316.0 691.0 L1343.8 695.1 L1371.7 691.0 L1399.5 695.1" fill="none" stroke="#2b95d2" stroke-width="1.6"/></svg>
</body></html>
